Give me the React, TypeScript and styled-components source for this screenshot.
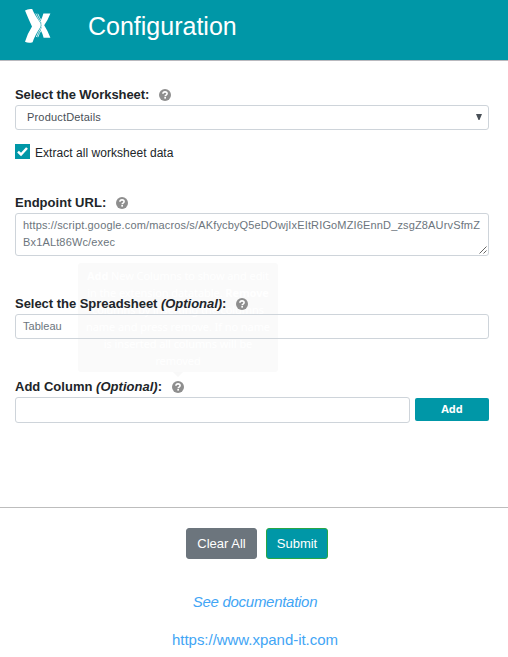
import React from "react";
import styled, { createGlobalStyle } from "styled-components";

const GlobalStyle = createGlobalStyle`
  * { box-sizing: border-box; }
  body {
    margin: 0;
    background: #fff;
    color: #212529;
    font-family: "Liberation Sans", Arial, sans-serif;
  }
`;

const Page = styled.div`
  width: 508px;
  height: 657px;
  overflow: hidden;
  display: flex;
  flex-direction: column;
`;

const Header = styled.header`
  height: 61px;
  flex: none;
  display: flex;
  align-items: flex-start;
  background: #0097a7;
  border-bottom: 1px solid #b9b9be;
`;

const Logo = styled.svg`
  width: 26px;
  height: 36px;
  margin: 8px 0 0 25px;
`;

const Title = styled.h1`
  margin: 11px 0 0 37px;
  font-size: 25px;
  line-height: 30px;
  font-weight: 400;
  color: #fff;
`;

const Form = styled.main`
  height: 446px;
  flex: none;
  padding: 24px 19px 0 15px;
  display: flex;
  flex-direction: column;
`;

const Group = styled.section<{ $height: number }>`
  height: ${(p) => p.$height}px;
  flex: none;
`;

const LabelRow = styled.div<{ $spacing: number }>`
  position: relative;
  width: max-content;
  height: 20px;
  padding-bottom: 1px;
  display: flex;
  align-items: center;
  gap: 10px;
  font-size: 13px;
  font-weight: 700;
  letter-spacing: ${(p) => p.$spacing}px;
  white-space: nowrap;
  line-height: 18px;
`;

const HelpSvg = styled.svg`
  width: 12px;
  height: 12px;
  flex: none;
  display: block;
`;

const Field = styled.div<{ $inset?: number; $height?: number }>`
  position: relative;
  height: ${(p) => p.$height ?? 25}px;
  flex: 1;
  display: flex;
  align-items: center;
  padding: 0 6px 1px ${(p) => p.$inset ?? 7}px;
  border: 1px solid #ced4da;
  border-radius: 3px;
  font-size: 11px;
  letter-spacing: 0.02px;
  color: #6c757d;
`;

const SelectText = styled.span`
  flex: 1;
  color: #495057;
  letter-spacing: 0.18px;
`;

const Arrow = styled.svg`
  width: 6px;
  height: 6px;
  margin-top: -1px;
`;

const UrlField = styled(Field)`
  height: 43px;
  display: block;
  padding: 3px 0 0 7px;
  line-height: 17px;
  letter-spacing: 0.15px;
  white-space: nowrap;
`;

const Grip = styled.svg`
  position: absolute;
  right: 1px;
  bottom: 1px;
  width: 8px;
  height: 8px;
`;

const CheckRow = styled.div`
  display: flex;
  align-items: center;
  gap: 5px;
  height: 15px;
  margin-top: 14px;
  font-size: 12px;
  line-height: 15px;
  letter-spacing: 0.04px;
`;

const CheckLabel = styled.span`
  padding-top: 3px;
`;

const CheckBox = styled.svg`
  width: 15px;
  height: 15px;
  background: #0097a7;
`;

const AddRow = styled.div`
  display: flex;
  align-items: center;
  gap: 5px;
`;

const AddButton = styled.button`
  width: 74px;
  height: 23px;
  margin-bottom: 1px;
  padding: 0 0 2px;
  border: 0;
  border-radius: 2px;
  background: #0097a7;
  color: #fff;
  font: 700 11px/21px "Open Sans", "Noto Sans", sans-serif;
`;

const Tooltip = styled.div`
  position: absolute;
  z-index: -1;
  left: 63px;
  bottom: 25px;
  width: 200px;
  height: 109px;
  padding: 4px 0;
  border-radius: 3px;
  background: #fafafa;
  color: #fff;
  font: 400 11px/17px "Noto Sans", sans-serif;
  letter-spacing: -0.08px;
  text-align: center;
  pointer-events: none;

  &::after {
    content: "";
    position: absolute;
    left: 95px;
    top: 100%;
    border: 5px solid transparent;
    border-bottom: 0;
    border-top-color: #f8f8f8;
  }
`;

const Footer = styled.footer`
  flex: 1;
  border-top: 1px solid #bdbdbd;
  padding-top: 20px;
  display: flex;
  flex-direction: column;
  align-items: center;
`;

const Actions = styled.div`
  display: flex;
  gap: 9px;
  margin-left: 6px;
`;

const ActionButton = styled.button<{ $primary?: boolean }>`
  width: ${(p) => (p.$primary ? 62 : 71)}px;
  height: 31px;
  padding: 0;
  border: 1px solid ${(p) => (p.$primary ? "#28a745" : "#6c757d")};
  border-radius: 3px;
  background: ${(p) => (p.$primary ? "#0097a7" : "#6c757d")};
  color: #fff;
  font: 400 13px/29px "Liberation Sans", Arial, sans-serif;
`;

const FooterLink = styled.a<{ $top: number; $italic?: boolean }>`
  margin: ${(p) => p.$top}px 0 0 2px;
  font-size: 15px;
  line-height: 18px;
  font-style: ${(p) => (p.$italic ? "italic" : "normal")};
  letter-spacing: ${(p) => (p.$italic ? -0.28 : -0.03)}px;
  color: #42a5f5;
  text-decoration: none;
`;

function Help() {
  return (
    <HelpSvg viewBox="0 0 12 12" aria-label="Help">
      <circle cx="6" cy="6" r="6" fill="#8e8e8e" />
      <path
        d="M3.9 4.7C4 3.5 4.8 2.9 6 2.9c1.3 0 2.1.7 2.1 1.7 0 .8-.5 1.2-1.1 1.6-.6.3-.8.5-.8 1"
        fill="none"
        stroke="#fff"
        strokeWidth="1.6"
      />
      <rect x="5.3" y="8" width="1.7" height="1.6" fill="#fff" />
    </HelpSvg>
  );
}

export default function App() {
  return (
    <>
      <GlobalStyle />
      <Page>
        <Header>
          <Logo viewBox="0 0 26 36" aria-label="Xpand IT">
            <path
              fill="#fff"
              d="M0 2.6Q2.8.5 7.2 1Q9 5.7 14.6 13.8Q16.8 16.8 15 19.8Q9.6 28 7.6 34.2Q3.5 35.7 0 33.7Q2.6 25.2 7 18.4Q3.8 12 0 2.6Z"
            />
            <path
              fill="#fff"
              d="M18.4 5.4H25.4Q22.6 12.5 19.2 17.2Q22.6 22.4 25.4 29.7H18.6Q17.5 25.5 15.5 21.8Q18.5 17.2 15.5 13.2Q17.5 8.8 18.4 5.4Z"
            />
            <path
              fill="none"
              stroke="#fff"
              strokeWidth="0.8"
              d="M10.8 5.5Q13 10.5 16 14.6Q17.7 17 16 19.9Q13 24.3 11.3 29M12.8 5.7Q14.3 9.5 16.3 12.6M16.2 22.2Q14 25.5 12.8 29.2"
            />
          </Logo>
          <Title>Configuration</Title>
        </Header>
        <Form>
          <Group $height={108}>
            <LabelRow $spacing={-0.06}>
              <span>Select the Worksheet:</span>
              <Help />
            </LabelRow>
            <Field $inset={11}>
              <SelectText>ProductDetails</SelectText>
              <Arrow viewBox="0 0 6 6">
                <path d="M0 0H6L3.5 6H2.5Z" fill="#495057" />
              </Arrow>
            </Field>
            <CheckRow>
              <CheckBox viewBox="0 0 15 15">
                <path d="M3 7.6L6 10.5L12 4" fill="none" stroke="#fff" strokeWidth="2.5" />
              </CheckBox>
              <CheckLabel>Extract all worksheet data</CheckLabel>
            </CheckRow>
          </Group>
          <Group $height={101}>
            <LabelRow $spacing={0.02}>
              <span>Endpoint URL:</span>
              <Help />
            </LabelRow>
            <UrlField>
              https://script.google.com/macros/s/AKfycbyQ5eDOwjIxEItRIGoMZI6EnnD_zsgZ8AUrvSfmZ
              <br />
              Bx1ALt86Wc/exec
              <Grip viewBox="0 0 8 8">
                <path d="M0.5 7.5L7.5 0.5M4.5 7.5L7.5 4.5" stroke="#555" strokeWidth="0.9" />
              </Grip>
            </UrlField>
          </Group>
          <Group $height={83}>
            <LabelRow $spacing={-0.03}>
              <span>
                Select the Spreadsheet <em>(Optional)</em>:
              </span>
              <Help />
            </LabelRow>
            <Field>Tableau</Field>
          </Group>
          <Group $height={50}>
            <LabelRow $spacing={0.02}>
              <span>
                Add Column <em>(Optional)</em>:
              </span>
              <Help />
              <Tooltip role="tooltip">
                <b>Add</b> New Columns to show and edit
                <br />
                in the extension datatable. <b>Remove</b>
                <br />
                columns by inserting the columns
                <br />
                name and press remove. If no name
                <br />
                is inserted all columns will be
                <br />
                removed
              </Tooltip>
            </LabelRow>
            <AddRow>
              <Field $height={26} />
              <AddButton>Add</AddButton>
            </AddRow>
          </Group>
        </Form>
        <Footer>
          <Actions>
            <ActionButton>Clear All</ActionButton>
            <ActionButton $primary>Submit</ActionButton>
          </Actions>
          <FooterLink $top={34} $italic>
            See documentation
          </FooterLink>
          <FooterLink $top={20}>https://www.xpand-it.com</FooterLink>
        </Footer>
      </Page>
    </>
  );
}
